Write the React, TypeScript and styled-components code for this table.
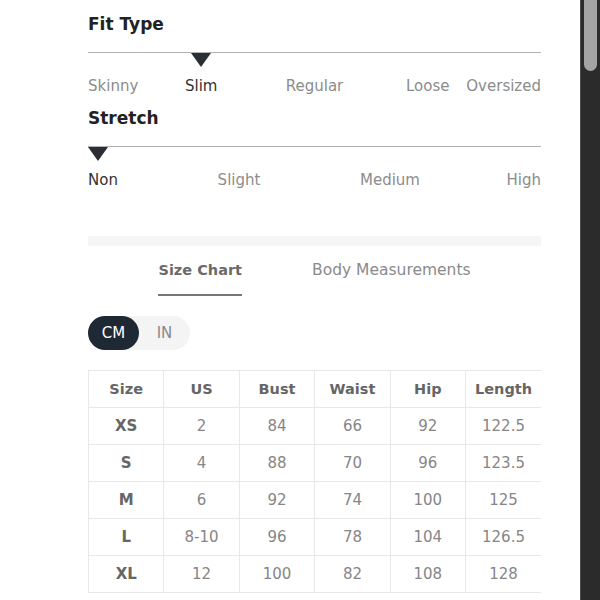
import styled, { createGlobalStyle } from "styled-components";

const Global = createGlobalStyle`
  body {
    margin: 0;
    background: #fff;
    overflow: hidden;
    font-family: "DejaVu Sans", "Noto Sans", sans-serif;
  }
`;

const Page = styled.div`
  display: flex;
  height: 600px;
`;

const Main = styled.div`
  flex: 1;
  padding: 12px 39px 0 88px;
`;

const ScrollTrack = styled.div`
  box-sizing: border-box;
  width: 20px;
  background: #2b2b2b;
  border-left: 1px solid #4d4d4d;
  padding: 0 3px 0 3px;
`;

const Thumb = styled.div`
  height: 71px;
  background: #a4a4a4;
  border-radius: 0 0 7px 7px;
`;

const Heading = styled.h3<{ $top: number }>`
  margin: ${(p) => p.$top}px 0 0;
  font-size: 17px;
  line-height: 24px;
  font-weight: 700;
  color: #222;
`;

const Rail = styled.div`
  margin-top: 16px;
  border-top: 1px solid #b2b2b2;
`;

const Row = styled.div<{ $h: number; $top: number }>`
  display: flex;
  height: ${(p) => p.$h}px;
  margin-top: ${(p) => p.$top}px;
`;

const Cell = styled.div<{ $grow: number; $align: string }>`
  flex: ${(p) => p.$grow} 1 0;
  min-width: 0;
  display: flex;
  justify-content: ${(p) => p.$align};
  align-items: center;
  white-space: nowrap;
`;

const Label = styled.span<{ $on: boolean }>`
  font-size: 15px;
  color: ${(p) => (p.$on ? "#333" : "#8c8c8c")};
`;

const Marker = styled.div`
  width: 0;
  height: 0;
  border-left: 10px solid transparent;
  border-right: 10px solid transparent;
  border-top: 14px solid #2a2f36;
  align-self: flex-start;
`;

const Band = styled.div`
  height: 10px;
  margin-top: 46px;
  background: #f6f6f6;
`;

const Tabs = styled.div`
  display: flex;
  justify-content: center;
  gap: 70px;
  margin-top: 14px;
`;

const Tab = styled.div<{ $on: boolean }>`
  font-size: ${(p) => (p.$on ? 14.5 : 15.5)}px;
  line-height: 20px;
  padding-bottom: 14px;
  font-weight: ${(p) => (p.$on ? 700 : 400)};
  color: ${(p) => (p.$on ? "#6a6a6a" : "#8a8a8a")};
  border-bottom: 2px solid ${(p) => (p.$on ? "#777" : "transparent")};
`;

const Toggle = styled.div`
  display: inline-flex;
  margin-top: 20px;
  height: 34px;
  border-radius: 17px;
  background: #f4f4f4;
`;

const Unit = styled.div<{ $on: boolean }>`
  width: 51px;
  display: flex;
  align-items: center;
  justify-content: center;
  border-radius: 17px;
  font-size: 15px;
  background: ${(p) => (p.$on ? "#1f2933" : "transparent")};
  color: ${(p) => (p.$on ? "#fff" : "#8a8a8a")};
`;

const Table = styled.table`
  margin-top: 20px;
  width: 100%;
  border-collapse: collapse;
  table-layout: fixed;
`;

const Th = styled.th`
  height: 36px;
  padding: 0;
  font-size: 14.5px;
  font-weight: 700;
  color: #666;
  border: 1px solid #e8e8e8;
  &:last-child {
    border-right: none;
  }
`;

const Td = styled.td<{ $bold?: boolean }>`
  height: 36px;
  padding: 0;
  text-align: center;
  font-size: 15px;
  font-weight: ${(p) => (p.$bold ? 700 : 400)};
  color: ${(p) => (p.$bold ? "#666" : "#868686")};
  border: 1px solid #e8e8e8;
  &:last-child {
    border-right: none;
  }
`;

function Scale({ labels, selected }: { labels: string[]; selected: number }) {
  const last = labels.length - 1;
  const align = (i: number) => (i === 0 ? "flex-start" : i === last ? "flex-end" : "center");
  const grow = (i: number) => (i === 0 || i === last ? 1 : 2);
  return (
    <>
      <Rail />
      <Row $h={14} $top={0}>
        {labels.map((l, i) => (
          <Cell key={l} $grow={grow(i)} $align={align(i)}>
            {i === selected && <Marker />}
          </Cell>
        ))}
      </Row>
      <Row $h={20} $top={9}>
        {labels.map((l, i) => (
          <Cell key={l} $grow={grow(i)} $align={align(i)}>
            <Label $on={i === selected}>{l}</Label>
          </Cell>
        ))}
      </Row>
    </>
  );
}

const rows = [
  ["XS", "2", "84", "66", "92", "122.5"],
  ["S", "4", "88", "70", "96", "123.5"],
  ["M", "6", "92", "74", "100", "125"],
  ["L", "8-10", "96", "78", "104", "126.5"],
  ["XL", "12", "100", "82", "108", "128"],
];

export default function App() {
  return (
    <Page>
      <Global />
      <Main>
        <Heading $top={0}>Fit Type</Heading>
        <Scale labels={["Skinny", "Slim", "Regular", "Loose", "Oversized"]} selected={1} />
        <Heading $top={10}>Stretch</Heading>
        <Scale labels={["Non", "Slight", "Medium", "High"]} selected={0} />
        <Band />
        <Tabs>
          <Tab $on>Size Chart</Tab>
          <Tab $on={false}>Body Measurements</Tab>
        </Tabs>
        <Toggle>
          <Unit $on>CM</Unit>
          <Unit $on={false}>IN</Unit>
        </Toggle>
        <Table>
          <thead>
            <tr>
              {["Size", "US", "Bust", "Waist", "Hip", "Length"].map((h) => (
                <Th key={h}>{h}</Th>
              ))}
            </tr>
          </thead>
          <tbody>
            {rows.map((r) => (
              <tr key={r[0]}>
                {r.map((v, i) => (
                  <Td key={i} $bold={i === 0}>
                    {v}
                  </Td>
                ))}
              </tr>
            ))}
          </tbody>
        </Table>
      </Main>
      <ScrollTrack>
        <Thumb />
      </ScrollTrack>
    </Page>
  );
}
